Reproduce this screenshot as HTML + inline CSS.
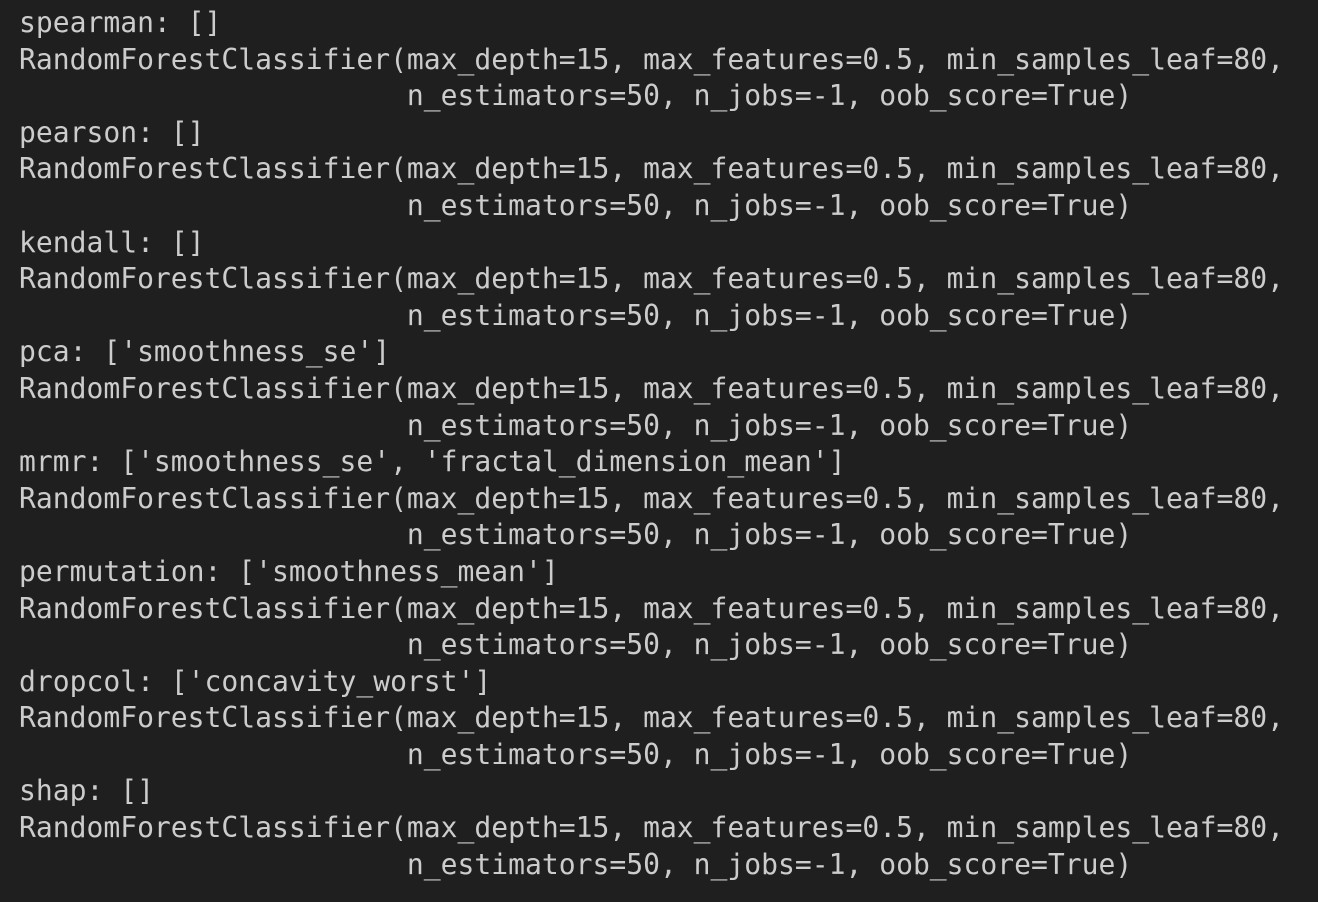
<!DOCTYPE html>
<html><head><meta charset="utf-8"><style>
html,body{margin:0;padding:0;background:#1f1f1f;width:1318px;height:902px;overflow:hidden}
pre{margin:0;padding:5px 0 0 19px;font-family:"DejaVu Sans Mono","Liberation Mono",monospace;font-size:28.02px;line-height:36.6px;color:#cccccc;white-space:pre}
</style></head><body><pre>spearman: []
RandomForestClassifier(max_depth=15, max_features=0.5, min_samples_leaf=80,
                       n_estimators=50, n_jobs=-1, oob_score=True)
pearson: []
RandomForestClassifier(max_depth=15, max_features=0.5, min_samples_leaf=80,
                       n_estimators=50, n_jobs=-1, oob_score=True)
kendall: []
RandomForestClassifier(max_depth=15, max_features=0.5, min_samples_leaf=80,
                       n_estimators=50, n_jobs=-1, oob_score=True)
pca: ['smoothness_se']
RandomForestClassifier(max_depth=15, max_features=0.5, min_samples_leaf=80,
                       n_estimators=50, n_jobs=-1, oob_score=True)
mrmr: ['smoothness_se', 'fractal_dimension_mean']
RandomForestClassifier(max_depth=15, max_features=0.5, min_samples_leaf=80,
                       n_estimators=50, n_jobs=-1, oob_score=True)
permutation: ['smoothness_mean']
RandomForestClassifier(max_depth=15, max_features=0.5, min_samples_leaf=80,
                       n_estimators=50, n_jobs=-1, oob_score=True)
dropcol: ['concavity_worst']
RandomForestClassifier(max_depth=15, max_features=0.5, min_samples_leaf=80,
                       n_estimators=50, n_jobs=-1, oob_score=True)
shap: []
RandomForestClassifier(max_depth=15, max_features=0.5, min_samples_leaf=80,
                       n_estimators=50, n_jobs=-1, oob_score=True)</pre></body></html>
